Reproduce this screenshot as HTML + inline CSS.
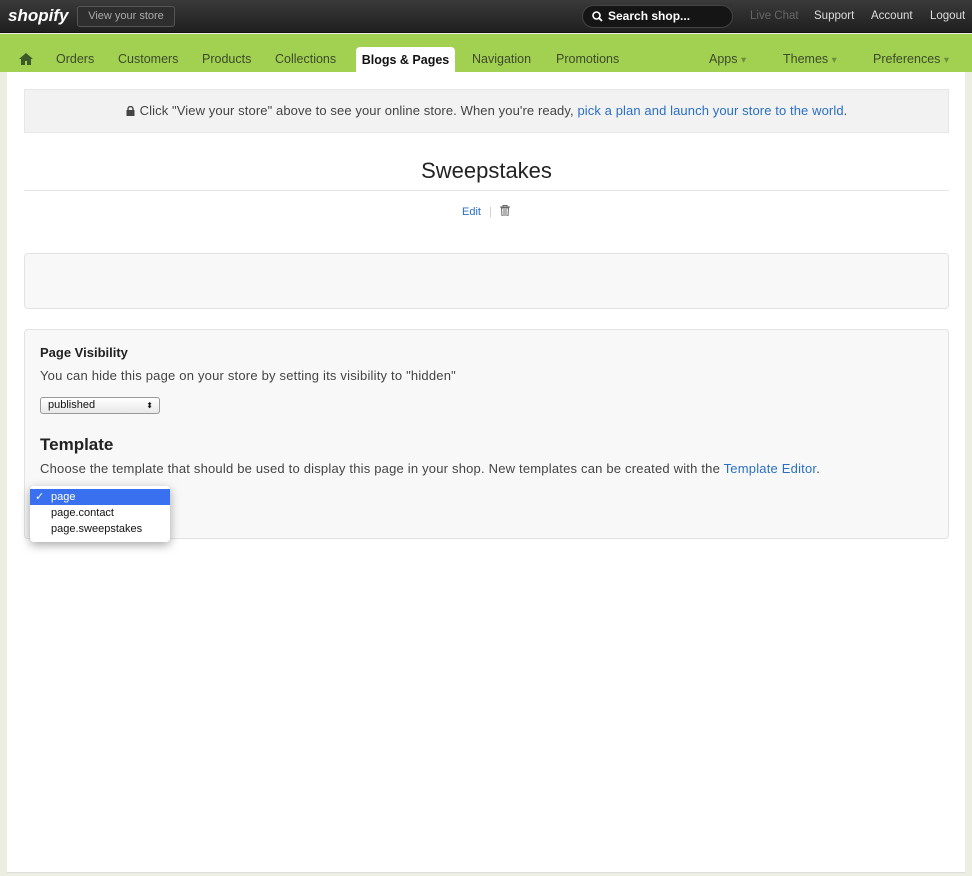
<!DOCTYPE html>
<html><head><meta charset="utf-8"><style>
*{box-sizing:border-box;margin:0;padding:0}
body{width:972px;height:876px;overflow:hidden;background:#eceee2;font-family:"Liberation Sans","DejaVu Sans",sans-serif;font-size:12px;color:#333;position:relative}
.top{position:absolute;left:0;top:0;width:972px;height:33px;background:linear-gradient(#3a3a3a,#1f1f1f);border-bottom:1px solid #111}
.logo{position:absolute;left:8px;top:6px;color:#fff;font-weight:bold;font-style:italic;font-size:17px}
.vys{position:absolute;left:77px;top:6px;width:98px;height:21px;border:1px solid #555;border-radius:3px;background:#2e2e2e;color:#aaa;font-size:11px;line-height:19px;text-align:center}
.search{position:absolute;left:582px;top:5px;width:151px;height:23px;border-radius:12px;background:#151515;border:1px solid #444;color:#fff;font-size:12px;line-height:21px;padding-left:25px;font-weight:bold}
.tl{position:absolute;top:10px;font-size:11.5px;color:#ddd}
.nav{position:absolute;left:0;top:34px;width:972px;height:38px;background:#a2d152}
.nv{position:absolute;top:18px;font-size:12.5px;color:#3d4a2a}
.active{position:absolute;left:356px;top:47px;width:99px;height:26px;background:#fff;border-radius:4px 4px 0 0;font-weight:bold;color:#111;font-size:12.5px;text-align:center;line-height:26px}
.main{position:absolute;left:7px;top:72px;width:958px;height:801px;background:#fff;border-bottom:1px solid #ddd}
.notice{position:absolute;left:24px;top:89px;width:925px;height:44px;background:#f2f2f2;border:1px solid #e6e6e6;text-align:center;line-height:42px;font-size:13px;letter-spacing:.1px;color:#444}
a{color:#2a6fc7;text-decoration:none}
h1{position:absolute;left:24px;top:158px;width:925px;text-align:center;font-weight:normal;font-size:22px;color:#222;height:33px;border-bottom:1px solid #e4e4e4}
.edit{position:absolute;left:462px;top:205px;font-size:11px}
.box1{position:absolute;left:24px;top:253px;width:925px;height:56px;background:#f8f8f8;border:1px solid #e2e2e2;border-radius:4px}
.box2{position:absolute;left:24px;top:329px;width:925px;height:210px;background:#f8f8f8;border:1px solid #e2e2e2;border-radius:4px}
.t{font-size:13px;letter-spacing:.2px;color:#444}
.sel{position:absolute;left:40px;top:397px;width:120px;height:17px;border:1px solid #999;border-radius:3px;background:linear-gradient(#fff,#e8e8e8);font-size:11px;line-height:15px;padding-left:7px;color:#111}
.dd{position:absolute;left:30px;top:486px;width:140px;height:56px;background:#fff;border-radius:4px;box-shadow:0 3px 10px rgba(0,0,0,.35);font-size:11px;color:#111}
.dd div{height:16px;line-height:16px;padding-left:21px}
</style></head><body>
<div class="top">
<div class="logo">shopify</div>
<div class="vys">View your store</div>
<div class="search"><svg style="position:absolute;left:9px;top:5px" width="11" height="11" viewBox="0 0 11 11"><circle cx="4.5" cy="4.5" r="3.5" stroke="#fff" stroke-width="1.6" fill="none"/><path d="M7 7l3 3" stroke="#fff" stroke-width="1.8"/></svg>Search shop...</div>
<span class="tl" style="left:750px;color:#666">Live Chat</span>
<span class="tl" style="left:814px">Support</span>
<span class="tl" style="left:871px">Account</span>
<span class="tl" style="left:930px">Logout</span>
</div>
<div class="nav">
<svg style="position:absolute;left:19px;top:19px" width="14" height="12" viewBox="0 0 14 12"><path d="M7 0L0 6h2v6h4V8h2v4h4V6h2z" fill="#3d5a2a"/></svg>
<span class="nv" style="left:56px">Orders</span>
<span class="nv" style="left:118px">Customers</span>
<span class="nv" style="left:202px">Products</span>
<span class="nv" style="left:275px">Collections</span>
<span class="nv" style="left:472px">Navigation</span>
<span class="nv" style="left:556px">Promotions</span>
<span class="nv" style="left:709px">Apps <small style="color:#6d8f3c">▾</small></span>
<span class="nv" style="left:783px">Themes <small style="color:#6d8f3c">▾</small></span>
<span class="nv" style="left:873px">Preferences <small style="color:#6d8f3c">▾</small></span>
</div>
<div class="active">Blogs &amp; Pages</div>
<div class="main"></div>
<div class="notice"><svg width="9" height="10" viewBox="0 0 9 10" style="vertical-align:-1px;margin-right:5px"><path d="M2 4V3a2.5 2.5 0 015 0v1" stroke="#444" stroke-width="1.4" fill="none"/><rect x="0.5" y="4" width="8" height="6" fill="#444"/></svg>Click "View your store" above to see your online store. When you're ready, <a>pick a plan and launch your store to the world</a>.</div>
<h1>Sweepstakes</h1>
<div class="edit"><a>Edit</a> <span style="color:#ccc;margin:0 5px">|</span> <svg width="10" height="11" viewBox="0 0 10 11" style="vertical-align:-1px"><path d="M0 2h10M3 2V0.5h4V2M1.5 3h7l-.5 8h-6z" stroke="#666" fill="none"/><path d="M4 4v6M6 4v6" stroke="#666"/></svg></div>
<div class="box1"></div>
<div class="box2">
<div style="position:absolute;left:15px;top:15px;font-weight:bold;font-size:13px;color:#222">Page Visibility</div>
<div class="t" style="position:absolute;left:15px;top:38px">You can hide this page on your store by setting its visibility to "hidden"</div>
<div style="position:absolute;left:15px;top:105px;font-weight:bold;font-size:17px;color:#222">Template</div>
<div class="t" style="position:absolute;left:15px;top:131px;white-space:nowrap">Choose the template that should be used to display this page in your shop. New templates can be created with the <a>Template Editor</a>.</div>
</div>
<div class="sel">published<span style="position:absolute;right:6px;top:0;font-size:8px">⬍</span></div>
<div class="dd">
<div style="background:#3970f0;color:#fff;margin-top:3px;position:relative"><span style="position:absolute;left:5px;font-weight:bold">✓</span>page</div>
<div>page.contact</div>
<div>page.sweepstakes</div>
</div>
</body></html>
